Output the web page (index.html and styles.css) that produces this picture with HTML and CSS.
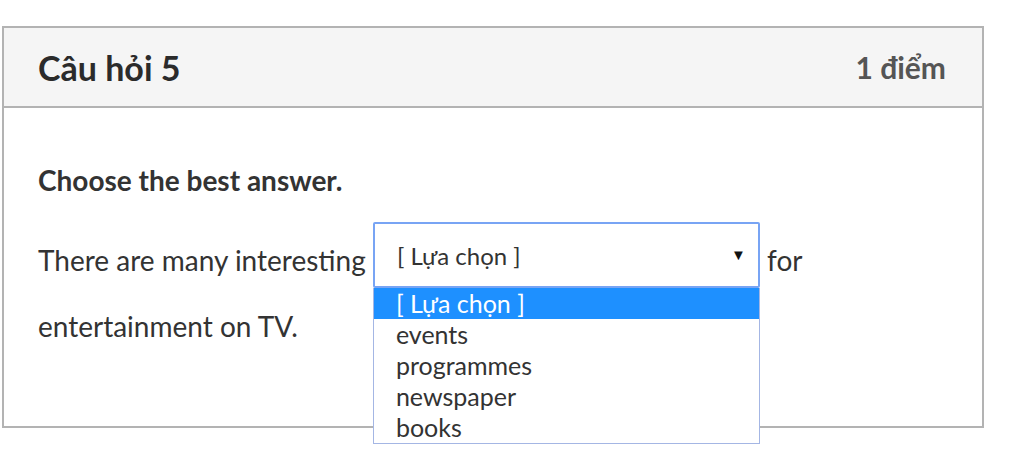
FILE: index.html
```html
<!DOCTYPE html>
<html>
<head>
  <title>Câu hỏi 5</title>
  <link rel="stylesheet" href="styles.css">
</head>
<body>

  <div class="question">
    <div class="question-head">
      <span class="question-title">Câu hỏi 5</span>
      <span class="question-score">1 điểm</span>
    </div>
    <div class="question-body">
      <p class="prompt">Choose the best answer.</p>
      <p class="sentence">There are many interesting
        <span class="pick">
          <span class="pick-box">
            <span class="pick-value">[ Lựa chọn ]</span>
            <span class="pick-arrow">&#9660;</span>
          </span>
          <span class="pick-list">
            <span class="pick-item selected">[ Lựa chọn ]</span>
            <span class="pick-item">events</span>
            <span class="pick-item">programmes</span>
            <span class="pick-item">newspaper</span>
            <span class="pick-item">books</span>
          </span>
        </span>
        for entertainment on TV.</p>
    </div>
  </div>

</body>
</html>
```

FILE: styles.css
```css
html, body {
  min-height: 469px;
}

body {
  margin: 0;
  font-family: Lato, "Open Sans", sans-serif;
  color: #333;
  background: #fff;
}

.question {
  width: 978px;
  margin: 26px 0 0 2px;
  border: 2px solid #b3b3b3;
}

.question-head {
  display: flex;
  justify-content: space-between;
  align-items: center;
  height: 78px;
  padding: 0 36px 0 34px;
  background: #f5f5f5;
  border-bottom: 2px solid #b3b3b3;
}

.question-title {
  font-size: 34px;
  font-weight: 700;
  color: #2b2b2b;
}

.question-score {
  font-size: 30px;
  font-weight: 700;
  color: #555;
}

.question-body {
  box-sizing: border-box;
  height: 318px;
  padding: 55px 34px 0;
}

.prompt {
  margin: 0;
  font-size: 28px;
  font-weight: 700;
}

.sentence {
  width: 800px;
  margin: 30px 0 0;
  font-size: 28px;
  line-height: 66px;
}

.pick {
  position: relative;
  z-index: 2;
  display: inline-block;
  vertical-align: top;
  margin-top: -5px;
  line-height: normal;
}

.pick-box {
  display: flex;
  align-items: center;
  justify-content: space-between;
  box-sizing: border-box;
  width: 387px;
  height: 66px;
  padding: 0 12px 0 22px;
  border: 2px solid #78a4f4;
  border-radius: 2px;
  font-size: 24px;
}

.pick-arrow {
  font-size: 15px;
  color: #111;
  margin-top: -2px;
}

.pick-list {
  position: absolute;
  left: 0;
  top: 66px;
  box-sizing: border-box;
  width: 387px;
  background: #fff;
  border: 1px solid #a4b6e4;
  border-top: 0;
}

.pick-item {
  display: block;
  height: 31px;
  padding-left: 22px;
  font-size: 25px;
  line-height: 31px;
  color: #333;
}

.pick-item.selected {
  background: #1e90ff;
  color: #fff;
}
```
